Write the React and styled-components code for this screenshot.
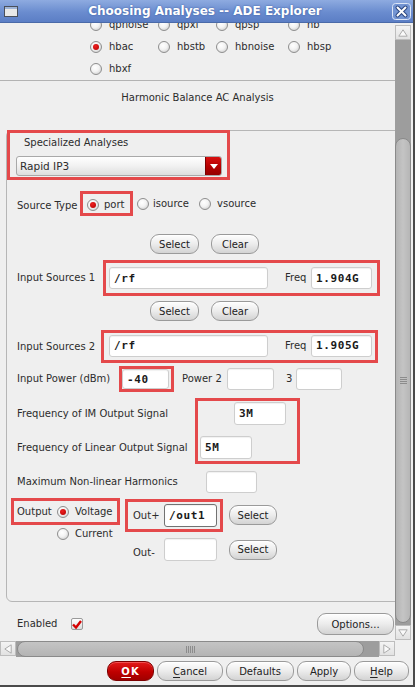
import React from 'react';
import styled, { createGlobalStyle } from 'styled-components';

const GlobalStyle = createGlobalStyle`
  html, body { margin: 0; padding: 0; background: #efefef; }
  body { font-family: "DejaVu Sans", "Noto Sans", sans-serif; }
  * { box-sizing: border-box; }
`;

const RED = '#e4494b';

const Window = styled.div`
  width: 415px;
  height: 687px;
  display: flex;
  flex-direction: column;
  background: #efefef;
  border-right: 2px solid #4a4a4a;
  border-bottom: 2px solid #4a4a4a;
  overflow: hidden;
  font-size: 10px;
  color: #2c2c2c;
`;

const TitleBar = styled.div`
  height: 23px;
  flex: none;
  display: flex;
  align-items: center;
  padding: 0 2px 0 4px;
  background: linear-gradient(#8eabe0, #6a8ccf 55%, #5b7ec5);
  border-bottom: 1px solid #4a6aa8;
`;

const Title = styled.div`
  flex: 1;
  text-align: center;
  color: #fff;
  font-weight: bold;
  font-size: 12px;
  text-shadow: 0 0 2px #34559a;
`;

const Body = styled.div`
  flex: 1;
  display: flex;
  min-height: 0;
`;

const Viewport = styled.div`
  width: 395px;
  flex: none;
  overflow: hidden;
  display: flex;
  flex-direction: column;
`;

const VScroll = styled.div`
  width: 16px;
  flex: none;
  display: flex;
  flex-direction: column;
  padding: 2px 0 1px;
  margin-right: 2px;
`;

const ArrowBox = styled.div`
  width: 16px;
  height: 15px;
  flex: none;
  display: flex;
  align-items: center;
  justify-content: center;
  background: linear-gradient(#f4f4f4, #e2e2e2);
  border: 1px solid #bdbdbd;
`;

const VTrack = styled.div`
  flex: 1;
  display: flex;
  flex-direction: column;
  background: #9d9d9d;
  padding: 98px 0 2px;
`;

const VThumb = styled.div`
  flex: 1;
  border: 1px solid #8a8a8a;
  border-radius: 8px;
  background: linear-gradient(90deg, #b4b4b4, #c4c4c4 50%, #b6b6b6);
  display: flex;
  align-items: center;
  justify-content: center;
`;

const Grip = styled.div`
  width: ${p => p.$w}px;
  height: ${p => p.$h}px;
  background: ${p => p.$vertical
    ? 'repeating-linear-gradient(90deg, #8c8c8c 0 1px, transparent 1px 2px)'
    : 'repeating-linear-gradient(#8c8c8c 0 1px, transparent 1px 2px)'};
`;

const HScrollRow = styled.div`
  height: 16px;
  flex: none;
  display: flex;
`;

const HTrack = styled.div`
  width: 363px;
  flex: none;
  display: flex;
  background: #9d9d9d;
  padding: 0 15px 0 1px;
`;

const HThumb = styled.div`
  flex: 1;
  border: 1px solid #8a8a8a;
  border-radius: 8px;
  background: linear-gradient(#c4c4c4, #b4b4b4);
  display: flex;
  align-items: center;
  justify-content: center;
`;

const ButtonBar = styled.div`
  height: 28px;
  flex: none;
  display: flex;
  align-items: center;
  justify-content: flex-end;
  gap: 3px;
  padding-right: 4px;
`;

const Button = styled.button`
  width: ${p => p.$w}px;
  height: ${p => p.$h || 20}px;
  flex: none;
  margin: 0;
  margin-left: ${p => p.$ml || 0}px;
  padding: 0;
  border: 1px solid ${p => (p.$primary ? '#7d0000' : '#9a9a9a')};
  border-radius: 9px;
  background: ${p => (p.$primary
    ? 'linear-gradient(#e41a1a, #bf0000 55%, #a00000)'
    : 'linear-gradient(#fefefe, #ececec 50%, #d3d3d3)')};
  box-shadow: inset 0 1px 0 ${p => (p.$primary ? '#f05050' : '#ffffff')};
  font-family: "DejaVu Sans", sans-serif;
  font-size: 10px;
  font-weight: ${p => (p.$primary ? 'bold' : 'normal')};
  letter-spacing: ${p => (p.$primary ? '1px' : '0')};
  color: ${p => (p.$primary ? '#ffffff' : '#222222')};
  u { text-underline-offset: 2px; }
`;

const AnalysisGrid = styled.div`
  display: grid;
  grid-template-columns: 68px 58px 72px 60px;
  grid-auto-rows: 22px;
  padding-left: 90px;
  margin-top: -9px;
`;

const RadioItem = styled.label`
  display: flex;
  align-items: center;
  gap: ${p => p.$gap || 6}px;
  flex: none;
  margin-left: ${p => p.$ml || 0}px;
  white-space: nowrap;
  line-height: 14px;
`;

const RadioCircle = styled.span`
  width: 12px;
  height: 12px;
  flex: none;
  border-radius: 50%;
  border: 1px solid #8e8e8e;
  background: radial-gradient(circle at 40% 35%, #ffffff 0%, #f3f3f3 45%, #c4c4c4 100%);
  display: flex;
  align-items: center;
  justify-content: center;
  &::after {
    content: '';
    width: 6px;
    height: 6px;
    border-radius: 50%;
    background: ${p => (p.$on ? 'radial-gradient(circle at 40% 35%, #f02020, #b00000)' : 'transparent')};
  }
`;

const Separator = styled.div`
  height: 1px;
  flex: none;
  background: #b3b3b3;
`;

const SectionTitle = styled.div`
  margin-top: 10px;
  line-height: 14px;
  text-align: center;
`;

const Panel = styled.div`
  width: 405px;
  flex: none;
  margin: 25px 0 0 6px;
  border: 1px solid #b6b6b6;
  border-radius: 6px;
  padding: 0 0 40px 10px;
  display: flex;
  flex-direction: column;
`;

const Row = styled.div`
  display: flex;
  align-items: center;
  flex: none;
  height: ${p => (p.$h ? p.$h + 'px' : 'auto')};
  margin-top: ${p => p.$mt || 0}px;
  padding-left: ${p => p.$pl || 0}px;
`;

const Label = styled.span`
  flex: none;
  width: ${p => (p.$w ? p.$w + 'px' : 'auto')};
  margin-left: ${p => p.$ml || 0}px;
  padding-top: ${p => p.$pt || 0}px;
  line-height: ${p => p.$lh || 14}px;
  white-space: nowrap;
`;

const Field = styled.input.attrs({ readOnly: true, type: 'text' })`
  width: ${p => p.$w}px;
  height: ${p => p.$h || 22}px;
  flex: none;
  margin: 0;
  margin-left: ${p => p.$ml || 0}px;
  padding: 0 0 0 4px;
  border: 1px solid ${p => (p.$focus ? '#727272' : '#cecece')};
  border-radius: 3px;
  background: #fff;
  box-shadow: inset 0 1px 1px rgba(0, 0, 0, 0.06);
  font-family: "DejaVu Sans Mono", monospace;
  font-weight: bold;
  font-size: 11px;
  letter-spacing: 0.6px;
  color: #1a1a1a;
  outline: none;
`;

const Highlight = styled.div`
  flex: none;
  display: flex;
  align-items: center;
  border: 3px solid ${RED};
`;

const SpecBox = styled(Highlight)`
  flex-direction: column;
  align-items: stretch;
  width: 223px;
  height: 50px;
  margin: -1px 0 0 -10px;
  padding: 3px 5px 1px 6px;
`;

const PortBox = styled(Highlight)`
  width: 53px;
  height: 25px;
  padding: 2px 0 0 4px;
`;

const SourceBox = styled(Highlight)`
  width: 277px;
  height: ${p => p.$h}px;
  padding: ${p => p.$pad};
`;

const PowerBox = styled(Highlight)`
  width: 55px;
  height: 26px;
  padding: 0;
`;

const FreqBox = styled(Highlight)`
  width: 105px;
  height: 66px;
  flex-direction: column;
  align-items: flex-start;
  gap: 11px;
  padding: 1px 0 2px 0;
`;

const OutputBox = styled(Highlight)`
  width: 109px;
  height: 27px;
  padding: 0 0 0 3px;
`;

const OutPlusBox = styled(Highlight)`
  width: 98px;
  height: 33px;
  margin-top: 1px;
  padding: 0 0 0 5px;
`;

const LabelStack = styled.div`
  width: 178px;
  flex: none;
  display: flex;
  flex-direction: column;
  gap: 11px;
  padding-top: 4px;
`;

const Column = styled.div`
  display: flex;
  flex-direction: column;
  flex: none;
  margin-left: ${p => p.$ml || 0}px;
`;

const Dropdown = styled.div`
  height: 20px;
  margin-top: 6px;
  display: flex;
  align-items: center;
  border: 1px solid #a9a9a9;
  border-radius: 3px;
  background: linear-gradient(#ffffff, #f1f1f1 50%, #dedede);
  overflow: hidden;
`;

const DropText = styled.span`
  flex: 1;
  padding-left: 3px;
  font-size: 10.5px;
`;

const DropButton = styled.span`
  width: 16px;
  align-self: stretch;
  display: flex;
  align-items: center;
  justify-content: center;
  background: linear-gradient(#d81010, #b40000 55%, #950000);
  border-left: 1px solid #7a0000;
`;

const EnabledRow = styled.div`
  height: 22px;
  flex: none;
  margin-top: 11px;
  display: flex;
  align-items: center;
  padding: 0 1px 0 17px;
`;

const Checkbox = styled.span`
  width: 12px;
  height: 12px;
  flex: none;
  border: 1px solid #9a9a9a;
  border-radius: 2px;
  background: linear-gradient(#ffffff, #dcdcdc);
  display: flex;
  align-items: center;
  justify-content: center;
`;

const Corner = styled.div`
  flex: 1;
`;

const Up = () => (
  <svg width="10" height="8" viewBox="0 0 10 8"><path d="M5 0.8 L9.2 7.2 H0.8 Z" fill="#fafafa" stroke="#ababab" strokeWidth="1" /></svg>
);
const Down = () => (
  <svg width="10" height="8" viewBox="0 0 10 8"><path d="M5 7.2 L9.2 0.8 H0.8 Z" fill="#fafafa" stroke="#ababab" strokeWidth="1" /></svg>
);
const Left = () => (
  <svg width="8" height="10" viewBox="0 0 8 10"><path d="M0.8 5 L7.2 0.8 V9.2 Z" fill="#fafafa" stroke="#ababab" strokeWidth="1" /></svg>
);
const Right = () => (
  <svg width="8" height="10" viewBox="0 0 8 10"><path d="M7.2 5 L0.8 0.8 V9.2 Z" fill="#fafafa" stroke="#ababab" strokeWidth="1" /></svg>
);

const WinIcon = () => (
  <svg width="14" height="11" viewBox="0 0 14 11">
    <rect x="0.5" y="0.5" width="13" height="10" fill="#e8e8e8" stroke="#4a4f5a" />
    <rect x="1" y="1" width="12" height="2" fill="#9fb4d6" />
  </svg>
);

const CloseIcon = () => (
  <svg width="19" height="17" viewBox="0 0 19 17">
    <rect x="0.5" y="0.5" width="18" height="16" rx="3" fill="#7394d2" stroke="#dbe5f6" />
    <path d="M5.5 4.5 L13.5 12.5 M13.5 4.5 L5.5 12.5" stroke="#2b4680" strokeWidth="4" strokeLinecap="round" />
    <path d="M5.5 4.5 L13.5 12.5 M13.5 4.5 L5.5 12.5" stroke="#ffffff" strokeWidth="2" strokeLinecap="round" />
  </svg>
);

const Radio = ({ label, on, gap, ml }) => (
  <RadioItem $gap={gap} $ml={ml}>
    <RadioCircle $on={on} />
    {label}
  </RadioItem>
);

const analyses = [
  'qpnoise', 'qpxf', 'qpsp', 'hb',
  'hbac', 'hbstb', 'hbnoise', 'hbsp',
  'hbxf',
];

export default function App() {
  return (
    <>
      <GlobalStyle />
      <Window>
        <TitleBar>
          <WinIcon />
          <Title>Choosing Analyses -- ADE Explorer</Title>
          <CloseIcon />
        </TitleBar>
        <Body>
          <Viewport>
            <AnalysisGrid>
              {analyses.map(a => (
                <Radio key={a} label={a} on={a === 'hbac'} gap={7} />
              ))}
            </AnalysisGrid>
            <Separator />
            <SectionTitle>Harmonic Balance AC Analysis</SectionTitle>
            <Panel>
              <SpecBox>
                <Label style={{ paddingLeft: 8 }}>Specialized Analyses</Label>
                <Dropdown>
                  <DropText>Rapid IP3</DropText>
                  <DropButton>
                    <svg width="8" height="5" viewBox="0 0 8 5"><path d="M0 0 H8 L4 5 Z" fill="#fff" /></svg>
                  </DropButton>
                </Dropdown>
              </SpecBox>

              <Row $mt={11}>
                <Label $w={63} $pt={4}>Source Type</Label>
                <PortBox>
                  <Radio label="port" on gap={5} />
                </PortBox>
                <Radio label="isource" gap={4} ml={4} />
                <Radio label="vsource" gap={6} ml={10} />
              </Row>

              <Row $mt={18} $pl={133}>
                <Button $w={49}>Select</Button>
                <Button $w={48} $ml={12}>Clear</Button>
              </Row>

              <Row $mt={6}>
                <Label $w={86}>Input Sources 1</Label>
                <SourceBox $h={36} $pad="0 0 0 3px">
                  <Field $w={159} defaultValue="/rf" />
                  <Label $w={26} $ml={17}>Freq</Label>
                  <Field $w={61} defaultValue="1.904G" />
                </SourceBox>
              </Row>

              <Row $mt={5} $pl={133}>
                <Button $w={49}>Select</Button>
                <Button $w={48} $ml={12}>Clear</Button>
              </Row>

              <Row $mt={9}>
                <Label $w={84}>Input Sources 2</Label>
                <SourceBox $h={33} $pad="0 0 2px 5px">
                  <Field $w={159} defaultValue="/rf" />
                  <Label $w={26} $ml={17}>Freq</Label>
                  <Field $w={61} defaultValue="1.905G" />
                </SourceBox>
              </Row>

              <Row $mt={3}>
                <Label $w={102}>Input Power (dBm)</Label>
                <PowerBox>
                  <Field $w={47} $h={20} defaultValue="-40" />
                </PowerBox>
                <Label $w={45} $ml={8}>Power 2</Label>
                <Field $w={47} />
                <Label $w={10} $ml={12}>3</Label>
                <Field $w={46} />
              </Row>

              <Row $mt={6} style={{ alignItems: 'flex-start' }}>
                <LabelStack>
                  <Label $lh={23}>Frequency of IM Output Signal</Label>
                  <Label $lh={23}>Frequency of Linear Output Signal</Label>
                </LabelStack>
                <FreqBox>
                  <Field $w={52} $h={23} $ml={36} defaultValue="3M" />
                  <Field $w={52} $h={23} $ml={2} defaultValue="5M" />
                </FreqBox>
              </Row>

              <Row $mt={7}>
                <Label $w={189}>Maximum Non-linear Harmonics</Label>
                <Field $w={51} />
              </Row>

              <Row $mt={5} style={{ alignItems: 'flex-start' }}>
                <Column $ml={-6}>
                  <OutputBox>
                    <Label $w={40}>Output</Label>
                    <Radio label="Voltage" on gap={6} />
                  </OutputBox>
                  <Row $h={16} $mt={1} $pl={46}>
                    <Radio label="Current" gap={6} />
                  </Row>
                </Column>
                <Column $ml={5}>
                  <Row>
                    <OutPlusBox>
                      <Label $w={31}>Out+</Label>
                      <Field $w={53} $h={23} $focus defaultValue="/out1" />
                    </OutPlusBox>
                    <Button $w={48} $ml={6}>Select</Button>
                  </Row>
                  <Row $mt={6} $pl={8}>
                    <Label $w={31} $pt={6}>Out-</Label>
                    <Field $w={53} $h={23} />
                    <Button $w={48} $ml={12}>Select</Button>
                  </Row>
                </Column>
              </Row>
            </Panel>

            <EnabledRow>
              <Label $w={54}>Enabled</Label>
              <Checkbox>
                <svg width="10" height="9" viewBox="0 0 10 9"><path d="M1 4.5 L4 7.5 L9 1" fill="none" stroke="#d40000" strokeWidth="2.4" /></svg>
              </Checkbox>
              <Button $w={77} $h={22} style={{ marginLeft: 'auto' }}>Options...</Button>
            </EnabledRow>
          </Viewport>
          <VScroll>
            <ArrowBox><Up /></ArrowBox>
            <VTrack>
              <VThumb><Grip $w={7} $h={7} /></VThumb>
            </VTrack>
            <ArrowBox><Down /></ArrowBox>
          </VScroll>
        </Body>
        <HScrollRow>
          <ArrowBox><Left /></ArrowBox>
          <HTrack>
            <HThumb><Grip $w={9} $h={7} $vertical /></HThumb>
          </HTrack>
          <ArrowBox><Right /></ArrowBox>
          <Corner />
        </HScrollRow>
        <ButtonBar>
          <Button $w={47} $primary><u>O</u>K</Button>
          <Button $w={66}><u>C</u>ancel</Button>
          <Button $w={68}>Defaults</Button>
          <Button $w={54}>Apply</Button>
          <Button $w={55}><u>H</u>elp</Button>
        </ButtonBar>
      </Window>
    </>
  );
}
